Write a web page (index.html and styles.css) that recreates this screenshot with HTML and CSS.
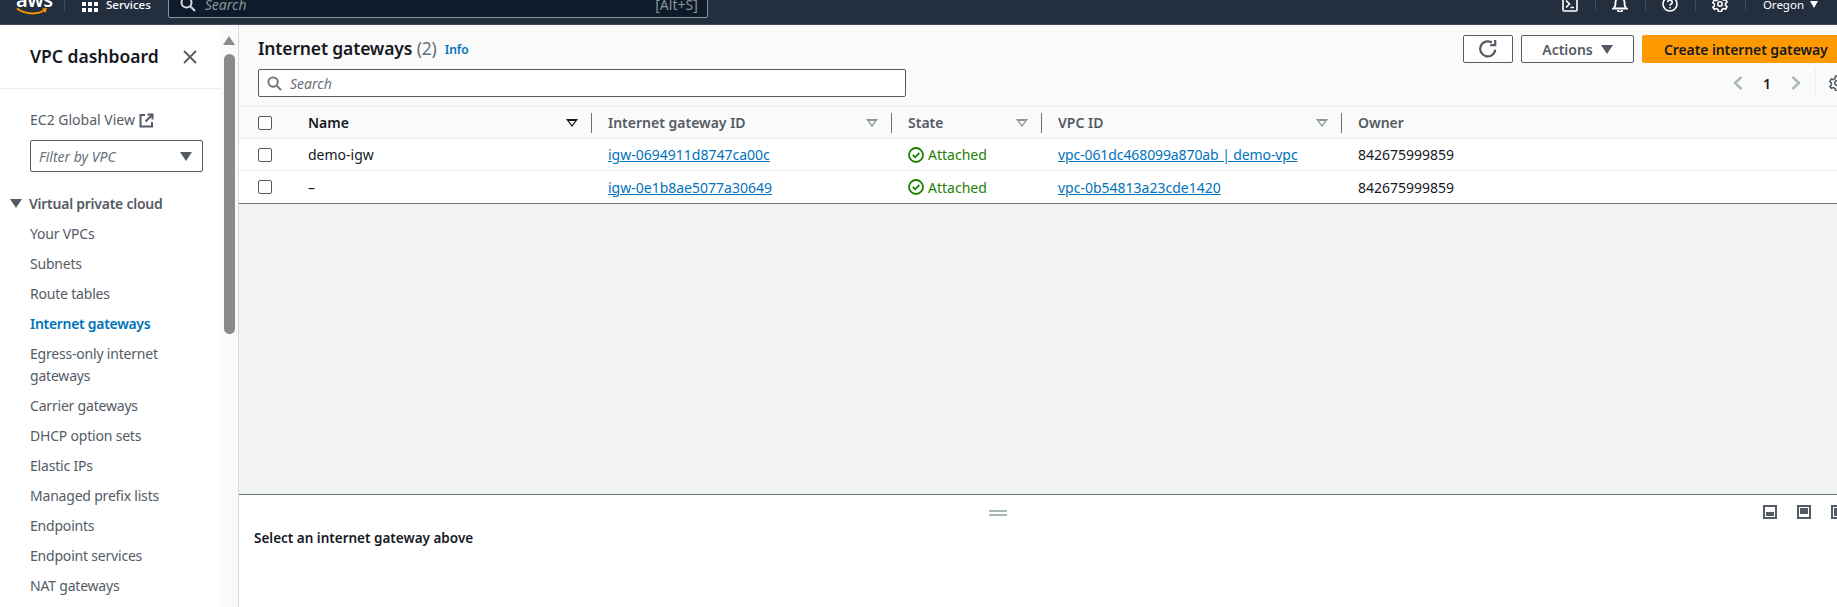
FILE: index.html
```html
<!DOCTYPE html>
<html lang="en">
<head>
<meta charset="utf-8">
<title>Internet gateways | VPC Console</title>
<link rel="stylesheet" href="styles.css">
</head>
<body>
<header class="topbar">
  <div class="topbar-row">
    <div class="logo"><span class="logo-text">aws</span>
      <svg class="logo-smile" width="32" height="9" viewBox="0 0 32 9"><path d="M1 1.5C9 7.5 21 8 29 3" fill="none" stroke="#f90" stroke-width="2"/><path d="M26 1.5l5-.5-1.5 5" fill="#f90"/></svg>
    </div>
    <span class="top-sep"></span>
    <svg class="grid-icon" width="16" height="16" viewBox="0 0 16 16" fill="#fff"><rect x="0" y="0" width="4" height="4"/><rect x="6" y="0" width="4" height="4"/><rect x="12" y="0" width="4" height="4"/><rect x="0" y="6" width="4" height="4"/><rect x="6" y="6" width="4" height="4"/><rect x="12" y="6" width="4" height="4"/><rect x="0" y="12" width="4" height="4"/><rect x="6" y="12" width="4" height="4"/><rect x="12" y="12" width="4" height="4"/></svg>
    <span class="services">Services</span>
    <div class="top-search">
      <svg width="16" height="16" viewBox="0 0 16 16" fill="none" stroke="#d5dbdb" stroke-width="2"><circle cx="6.5" cy="6.5" r="5"/><path d="M10.5 10.5L15 15"/></svg>
      <span class="top-search-text">Search</span>
      <span class="top-search-key">[Alt+S]</span>
    </div>
    <div class="top-actions">
      <svg class="ti" width="16" height="16" viewBox="0 0 16 16" fill="none" stroke="#fff" stroke-width="1.6"><rect x="1" y="1" width="14" height="14" rx="1"/><path d="M4 4.5L7.5 8 4 11.5M8.5 11.5H12"/></svg>
      <span class="top-div"></span>
      <svg class="ti" width="16" height="16" viewBox="0 0 16 16" fill="none" stroke="#fff" stroke-width="1.8"><path d="M1.500 12.500c2-1.500 2-3 2-6a4.500 4.500 0 0 1 9 0c0 3 0 4.500 2 6z"/><path d="M6 14a2 2 0 0 0 4 0"/></svg>
      <span class="top-div"></span>
      <svg class="ti" width="16" height="16" viewBox="0 0 16 16" fill="none" stroke="#fff" stroke-width="1.6"><circle cx="8" cy="8" r="7"/><path d="M5.800 6.200a2.200 2.200 0 1 1 3.400 1.800c-.8.500-1.200 1-1.200 1.800M8 11v1.500"/></svg>
      <span class="top-div"></span>
      <svg class="ti" width="16" height="16" viewBox="0 0 16 16" fill="none" stroke="#fff" stroke-width="1.600"><circle cx="8" cy="8" r="2.200"/><path d="M6.500 1h3l.4 2 1.700 1 2-.7 1.400 2.700-1.500 1.300v2l1.500 1.300-1.400 2.700-2-.7-1.700 1-.4 2h-3l-.4-2-1.700-1-2 .7L.9 11.300l1.500-1.300V8L.9 6.700 2.300 4l2 .7 1.700-1z"/></svg>
      <span class="top-div"></span>
      <span class="region">Oregon</span>
      <span class="caret-white"></span>
    </div>
  </div>
</header>

<div class="shell">
  <aside class="sidebar">
    <div class="side-scroll">
      <div class="side-head">
        <span class="side-title">VPC dashboard</span>
        <svg width="14" height="14" viewBox="0 0 14 14" fill="none" stroke="#545b64" stroke-width="1.800"><path d="M1 1l12 12M13 1L1 13"/></svg>
      </div>
      <div class="side-body">
        <a class="global-link">EC2 Global View
          <svg width="15" height="15" viewBox="0 0 15 15" fill="none" stroke="#545b64" stroke-width="2"><path d="M6 2H1.500v11.500H13V9M8.500 1.500H13.500V6.500M13 2L6.500 8.500"/></svg>
        </a>
        <div class="vpc-filter"><span>Filter by VPC</span><i class="caret-grey big"></i></div>
        <div class="side-section"><i class="caret-grey section-caret"></i>Virtual private cloud</div>
        <nav class="side-nav">
          <a>Your VPCs</a>
          <a>Subnets</a>
          <a>Route tables</a>
          <a class="active">Internet gateways</a>
          <a>Egress-only internet gateways</a>
          <a>Carrier gateways</a>
          <a>DHCP option sets</a>
          <a>Elastic IPs</a>
          <a>Managed prefix lists</a>
          <a>Endpoints</a>
          <a>Endpoint services</a>
          <a>NAT gateways</a>
        </nav>
      </div>
    </div>
    <div class="scrollbar">
      <i class="scroll-up"></i>
      <i class="scroll-thumb"></i>
    </div>
  </aside>

  <main class="main">
    <section class="list-head">
      <div class="title-row">
        <h1 class="page-title">Internet gateways <span class="count">(2)</span></h1>
        <a class="info">Info</a>
        <div class="btns">
          <button class="btn btn-icon"><svg width="20" height="20" viewBox="0 0 18 18" fill="none" stroke="#545b64" stroke-width="2"><path d="M15.500 9.500A6.800 6.800 0 1 1 12.500 3.200"/><path d="M15.500 1v4.500H11"/></svg></button>
          <button class="btn btn-actions">Actions <i class="caret-grey big"></i></button>
          <button class="btn btn-primary">Create internet gateway</button>
        </div>
      </div>
      <div class="search-row">
        <div class="list-search">
          <svg width="15" height="15" viewBox="0 0 16 16" fill="none" stroke="#687078" stroke-width="2"><circle cx="6.500" cy="6.500" r="5"/><path d="M10.500 10.500L15 15"/></svg>
          <span>Search</span>
        </div>
      </div>
      <div class="pager">
        <svg width="10" height="16" viewBox="0 0 10 16" fill="none" stroke="#aab7b8" stroke-width="2.400"><path d="M8.500 2L2 8l6.500 6"/></svg>
        <span class="page-no">1</span>
        <svg width="10" height="16" viewBox="0 0 10 16" fill="none" stroke="#aab7b8" stroke-width="2.400"><path d="M1.500 2L8 8l-6.500 6"/></svg>
        <span class="pager-div"></span>
        <svg class="pager-gear" width="16" height="16" viewBox="0 0 16 16" fill="none" stroke="#545b64" stroke-width="1.600"><circle cx="8" cy="8" r="2.200"/><path d="M6.500 1h3l.4 2 1.700 1 2-.7 1.400 2.700-1.500 1.300v2l1.500 1.300-1.400 2.700-2-.7-1.700 1-.4 2h-3l-.4-2-1.700-1-2 .7L.9 11.300l1.500-1.300V8L.9 6.700 2.300 4l2 .7 1.700-1z"/></svg>
      </div>
    </section>

    <section class="table">
      <div class="tr th">
        <div class="cell check"><i class="box"></i></div>
        <div class="cell dark">Name<i class="sort active"></i></div>
        <div class="cell">Internet gateway ID<i class="sort"></i></div>
        <div class="cell">State<i class="sort"></i></div>
        <div class="cell">VPC ID<i class="sort"></i></div>
        <div class="cell">Owner</div>
      </div>
      <div class="tr">
        <div class="cell check"><i class="box"></i></div>
        <div class="cell">demo-igw</div>
        <div class="cell"><a class="link">igw-0694911d8747ca00c</a></div>
        <div class="cell attached"><svg width="16" height="16" viewBox="0 0 16 16" fill="none" stroke="#1d8102" stroke-width="1.800"><circle cx="8" cy="8" r="7"/><path d="M4.800 8l2.300 2.300 4.200-4.300"/></svg>Attached</div>
        <div class="cell"><a class="link link-vpc">vpc-061dc468099a870ab | demo-vpc</a></div>
        <div class="cell">842675999859</div>
      </div>
      <div class="tr last">
        <div class="cell check"><i class="box"></i></div>
        <div class="cell">–</div>
        <div class="cell"><a class="link">igw-0e1b8ae5077a30649</a></div>
        <div class="cell attached"><svg width="16" height="16" viewBox="0 0 16 16" fill="none" stroke="#1d8102" stroke-width="1.800"><circle cx="8" cy="8" r="7"/><path d="M4.800 8l2.300 2.300 4.200-4.300"/></svg>Attached</div>
        <div class="cell"><a class="link">vpc-0b54813a23cde1420</a></div>
        <div class="cell">842675999859</div>
      </div>
    </section>

    <div class="empty-area"></div>

    <section class="split">
      <div class="split-tools">
        <i class="handle"></i>
        <div class="split-icons">
          <i class="pane bottom"></i>
          <i class="pane top"></i>
          <i class="pane side"></i>
        </div>
      </div>
      <p class="split-text">Select an internet gateway above</p>
    </section>
  </main>
</div>
</body>
</html>
```
FILE: styles.css
```css
* { box-sizing: border-box; }
html, body { margin: 0; height: 607px; overflow: hidden; }
body { font-family: "Noto Sans", Roboto, sans-serif; font-size: 14px; color: #16191f; background: #fff; display: flex; flex-direction: column; }
i { display: block; font-style: normal; }

.topbar { height: 25px; flex: none; background: #232f3e; border-bottom: 1px solid #414d5c; color: #fff; }
.topbar-row { height: 8px; display: flex; align-items: center; padding-left: 16px; }
.logo { width: 32px; height: 30px; position: relative; flex: none; }
.logo-text { display: block; font-weight: 600; font-size: 20px; line-height: 22px; letter-spacing: -.5px; }
.logo-smile { position: absolute; left: 0; top: 18px; }
.top-sep { width: 1px; height: 14px; background: #414d5c; margin: 0 17px 0 16px; }
.grid-icon { flex: none; }
.services { font-size: 11.5px; margin-left: 8px; font-weight: 500; }
.top-search { width: 540px; height: 28px; margin-left: 17px; background: #0f1b2a; border: 1px solid #879596; border-radius: 2px; display: flex; align-items: center; padding: 0 9px 0 11px; }
.top-search-text { font-style: italic; color: #879596; font-size: 14px; margin-left: 9px; }
.top-search-key { margin-left: auto; color: #879596; font-size: 14px; }
.top-actions { margin-left: auto; display: flex; align-items: center; padding-right: 19px; }
.ti { flex: none; margin: 0 16.500px; }
.top-div { width: 1px; height: 14px; background: #414d5c; }
.region { font-size: 11.500px; margin-left: 17px; }
.caret-white { width: 0; height: 0; border: 4.500px solid transparent; border-top: 7px solid #fff; border-bottom: 0; margin-left: 6px; }

.shell { flex: 1; display: flex; min-height: 0; }
.sidebar { width: 239px; flex: none; display: flex; border-right: 1px solid #d5dbdb; background: #fff; }
.side-scroll { width: 220px; flex: none; overflow: hidden; }
.side-head { height: 64px; display: flex; align-items: center; justify-content: space-between; padding: 0 23px 0 30px; border-bottom: 1px solid #eaeded; }
.side-title { font-size: 17.500px; font-weight: 600; line-height: 22px; margin-top: -2px; }
.side-body { padding-top: 20px; }
.global-link { display: flex; align-items: center; gap: 4px; height: 22px; padding-left: 30px; color: #545b64; line-height: 22px; }
.vpc-filter { display: flex; align-items: center; justify-content: space-between; width: 173px; height: 32px; margin: 9px 0 0 30px; padding: 0 10px 0 8px; border: 1px solid #545b64; border-radius: 2px; font-style: italic; color: #687078; }
.caret-grey { width: 0; height: 0; border: 5px solid transparent; border-top: 8px solid #545b64; border-bottom: 0; }
.caret-grey.big { border-width: 9px 6.500px 0; border-top-color: #545b64; border-bottom: 0; }
.caret-grey.section-caret { border-width: 9px 6px 0; margin-right: 7px; flex: none; }
.side-section { display: flex; align-items: center; margin: 20px 0 0 10px; height: 22px; color: #545b64; font-weight: 600; letter-spacing: -.25px; }
.side-nav { display: flex; flex-direction: column; gap: 8px; padding: 9px 0 0 30px; }
.side-nav a { color: #545b64; line-height: 22px; letter-spacing: -.2px; }
.side-nav a.active { color: #0073bb; font-weight: 600; letter-spacing: -.3px; }

.scrollbar { width: 18px; background: #fafafa; padding: 11px 3px 0 3px; display: flex; flex-direction: column; align-items: center; }
.scroll-up { width: 0; height: 0; border: 6px solid transparent; border-bottom: 9px solid #8a8a8a; border-top: 0; }
.scroll-thumb { width: 11px; height: 280px; margin-top: 9px; background: #8a8a8a; border-radius: 6px; }

.main { flex: 1; min-width: 0; display: flex; flex-direction: column; background: #f2f3f3; overflow: hidden; }
.list-head { height: 82px; flex: none; background: #fafafa; border-bottom: 1px solid #eaeded; padding: 10px 0 0 19px; position: relative; }
.title-row { display: flex; align-items: center; height: 28px; }
.page-title { margin: -2px 0 0; font-size: 17.500px; line-height: 28px; font-weight: 600; white-space: nowrap; letter-spacing: -.15px; }
.count { font-weight: 400; color: #687078; }
.info { font-size: 12px; color: #0073bb; font-weight: 600; margin: 1px 0 0 8px; }
.btns { margin-left: auto; display: flex; gap: 8px; flex: none; margin-right: -5px; }
.btn { height: 28px; border-radius: 2px; font: inherit; font-weight: 600; display: flex; align-items: center; justify-content: center; background: #fff; border: 1px solid #545b64; color: #545b64; padding: 0; }
.btn-icon { width: 50px; }
.btn-actions { width: 113px; gap: 8px; }
.btn-primary { width: 200px; background: #f90; border-color: #f90; color: #16191f; justify-content: flex-start; padding-left: 21px; letter-spacing: -.1px; }
.search-row { margin-top: 6px; }
.list-search { width: 648px; height: 28px; background: #fff; border: 1px solid #545b64; border-radius: 2px; display: flex; align-items: center; gap: 8px; padding: 0 8px; font-style: italic; color: #687078; font-size: 14px; }
.pager { position: absolute; top: 44px; left: 1494px; display: flex; align-items: center; height: 28px; white-space: nowrap; }
.page-no { width: 48px; text-align: center; font-weight: 600; color: #16191f; }
.pager-div { width: 1px; height: 28px; background: #eaeded; margin-left: 14px; }
.pager-gear { margin-left: 13px; flex: none; }

.table { flex: none; background: #fff; border-bottom: 1px solid #687078; }
.tr { display: grid; grid-template-columns: 69px 300px 300px 150px 300px 1fr; height: 32px; border-bottom: 1px solid #eaeded; }
.tr.last { height: 32px; border-bottom: 0; }
.tr.th { background: #fafafa; height: 32px; color: #545b64; font-weight: 600; }
.cell { display: flex; align-items: center; padding-left: 0; position: relative; white-space: nowrap; }
.check { padding-left: 19px; }
.tr.th .cell.dark { color: #16191f; }
.tr.th .cell + .cell:not(:last-child):not(.dark)::after, .tr.th .cell.dark::after { content: ""; position: absolute; right: 16px; top: 6px; height: 20px; width: 1px; background: #687078; }
.box { width: 14px; height: 14px; background: #fff; border: 1px solid #545b64; border-radius: 2px; }
.sort { position: absolute; right: 30px; top: 12px; width: 0; height: 0; border: 6px solid transparent; border-top: 8px solid #879596; border-bottom: 0; }
.sort.active { border-top-color: #16191f; }
.sort::after { content: ""; position: absolute; left: -3px; top: -6.500px; border: 3px solid transparent; border-top: 4px solid #fafafa; border-bottom: 0; }
.link { color: #0073bb; text-decoration: underline; }
.link-vpc { letter-spacing: -.1px; }
.attached { color: #1d8102; gap: 4px; }

.empty-area { flex: 1; background: #f2f3f3; }
.split { flex: none; height: 113px; background: #fff; border-top: 1px solid #687078; }
.split-tools { height: 28px; position: relative; display: flex; justify-content: flex-end; align-items: center; padding-top: 5px; }
.handle { position: absolute; left: 750px; top: 15px; width: 18px; height: 6px; border-top: 2px solid #aab7b8; border-bottom: 2px solid #aab7b8; }
.split-icons { display: flex; gap: 20px; margin-right: -8px; }
.pane { width: 14px; height: 14px; border: 2px solid #545b64; position: relative; flex: none; }
.pane::after { content: ""; position: absolute; background: #545b64; }
.pane.bottom::after { left: 1px; right: 1px; bottom: 1px; height: 4px; }
.pane.top::after { left: 1px; right: 1px; top: 1px; height: 6px; }
.pane.side::after { left: 1px; top: 1px; bottom: 1px; width: 6px; }
.split-text { margin: 5px 0 0 15px; font-size: 13.500px; font-weight: 600; line-height: 20px; }
```
